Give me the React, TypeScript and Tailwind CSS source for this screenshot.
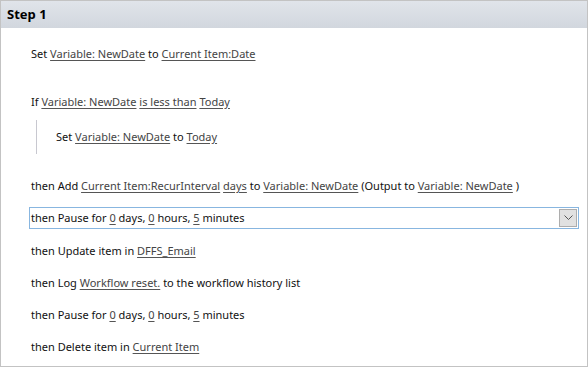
import React from "react";

const L = ({ children }: { children: React.ReactNode }) => (
  <span className="underline decoration-[#555] underline-offset-[2px] text-[#444]">{children}</span>
);

export default function App() {
  return (
    <div className="w-[588px] h-[367px] bg-white border border-[#c3c3c3] flex flex-col text-[11px] text-[#111] overflow-hidden" style={{ fontFamily: '"Noto Sans", "Open Sans", sans-serif' }}>
      <div className="h-[27px] shrink-0 bg-gradient-to-b from-[#e0e4ea] to-[#d2d7de] flex items-center pl-[6px]">
        <span className="font-bold text-[13px] text-black">Step 1</span>
      </div>
      <div className="flex flex-col">
        <div className="mt-[10px] h-[32px] flex items-center pl-[30px]">
          <span>Set <L>Variable: NewDate</L> to <L>Current Item:Date</L></span>
        </div>
        <div className="mt-[16px] h-[32px] flex items-center pl-[30px]">
          <span>If <L>Variable: NewDate</L> <L>is less than</L> <L>Today</L></span>
        </div>
        <div className="mt-[2px] h-[34px] ml-[35px] border-l border-[#c8c8d0] flex items-center pl-[19px]">
          <span>Set <L>Variable: NewDate</L> to <L>Today</L></span>
        </div>
        <div className="mt-[16px] h-[32px] flex items-center pl-[30px]">
          <span>then Add <L>Current Item:RecurInterval</L> <L>days</L> to <L>Variable: NewDate</L> (Output to <L>Variable: NewDate</L> )</span>
        </div>
        <div className="mt-[5px] ml-[28px] w-[550px] h-[22px] border border-[#88b6e0] flex items-center">
          <span className="pl-[1px] flex-1">then Pause for <L>0</L> days, <L>0</L> hours, <L>5</L> minutes</span>
          <div className="w-[18px] h-[18px] mr-[1px] bg-[#e1e1e1] border border-[#adadad] flex items-center justify-center">
            <svg width="9" height="6" viewBox="0 0 9 6"><path d="M0.5 0.5 L4.5 4.5 L8.5 0.5" fill="none" stroke="#555" strokeWidth="1" /></svg>
          </div>
        </div>
        <div className="mt-[6px] h-[32px] flex items-center pl-[30px]">
          <span>then Update item in <L>DFFS_Email</L></span>
        </div>
        <div className="h-[32px] flex items-center pl-[30px]">
          <span>then Log <L>Workflow reset.</L> to the workflow history list</span>
        </div>
        <div className="h-[32px] flex items-center pl-[30px]">
          <span>then Pause for <L>0</L> days, <L>0</L> hours, <L>5</L> minutes</span>
        </div>
        <div className="h-[32px] flex items-center pl-[30px]">
          <span>then Delete item in <L>Current Item</L></span>
        </div>
      </div>
    </div>
  );
}
